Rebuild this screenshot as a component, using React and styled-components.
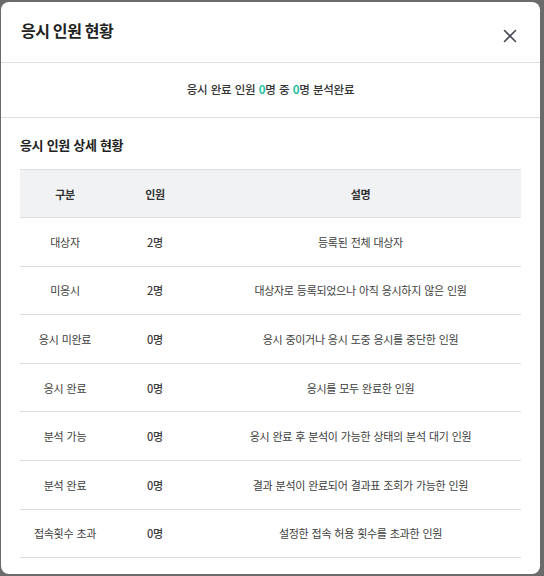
import styled, { createGlobalStyle } from "styled-components";

const GlobalStyle = createGlobalStyle`
  html, body {
    margin: 0;
    padding: 0;
    background: #6b6b6b;
  }
  body {
    font-family: "Noto Sans CJK KR", "Noto Sans", sans-serif;
    color: #333;
  }
`;

const rows = [
  { type: "대상자", count: 2, desc: "등록된 전체 대상자" },
  { type: "미응시", count: 2, desc: "대상자로 등록되었으나 아직 응시하지 않은 인원" },
  { type: "응시 미완료", count: 0, desc: "응시 중이거나 응시 도중 응시를 중단한 인원" },
  { type: "응시 완료", count: 0, desc: "응시를 모두 완료한 인원" },
  { type: "분석 가능", count: 0, desc: "응시 완료 후 분석이 가능한 상태의 분석 대기 인원" },
  { type: "분석 완료", count: 0, desc: "결과 분석이 완료되어 결과표 조회가 가능한 인원" },
  { type: "접속횟수 초과", count: 0, desc: "설정한 접속 허용 횟수를 초과한 인원" },
];

const Page = styled.div`
  padding: 2px 4px 2px 1px;
`;

const Modal = styled.div`
  background: #fff;
  border-radius: 8px;
  height: 572px;
  overflow: hidden;
`;

const Header = styled.div`
  box-sizing: border-box;
  display: flex;
  justify-content: space-between;
  align-items: flex-start;
  padding: 18px 20px 0 20px;
  border-bottom: 1px solid #dedfe3;
  height: 61px;
`;

const Title = styled.h2`
  margin: 0;
  font-size: 16px;
  line-height: 20px;
  font-weight: 700;
  letter-spacing: -0.4px;
  color: #222;
`;

const CloseButton = styled.button`
  border: 0;
  background: none;
  padding: 0;
  margin: 7px 1px 0 0;
  width: 18px;
  height: 18px;
  display: flex;
  align-items: center;
  justify-content: center;
  cursor: pointer;
`;

const Summary = styled.div`
  height: 55px;
  box-sizing: border-box;
  border-bottom: 1px solid #dedfe3;
  display: flex;
  align-items: center;
  justify-content: center;
  font-size: 11.5px;
  font-weight: 500;
  letter-spacing: -0.25px;
  word-spacing: 1px;
  color: #333;
  padding-bottom: 2px;
`;

const Num = styled.span`
  color: #1cc09f;
  font-weight: 700;
`;

const Body = styled.div`
  padding: 0 19px 0 19px;
`;

const SectionTitle = styled.h3`
  margin: 17px 0 14px;
  font-size: 13px;
  line-height: 20px;
  font-weight: 700;
  letter-spacing: -0.4px;
  word-spacing: 1px;
  color: #222;
`;

const Table = styled.table`
  width: 100%;
  border-collapse: collapse;
  table-layout: fixed;
  font-size: 11px;
  letter-spacing: -0.3px;
  word-spacing: 1px;
`;

const HeadCell = styled.th`
  background: #f1f2f4;
  height: 47px;
  padding: 0;
  font-weight: 700;
  color: #333;
  border-top: 1px solid #dcdde1;
  border-bottom: 1px solid #dcdde1;
  width: ${(p) => p.$w || "auto"};
`;

const Cell = styled.td`
  height: 47.6px;
  padding: 0;
  text-align: center;
  color: #3d3d3d;
  font-weight: ${(p) => (p.$strong ? 500 : 400)};
  border-bottom: 1px solid #dcdde1;
`;

const CloseIcon = () => (
  <svg width="14" height="14" viewBox="0 0 14 14" fill="none">
    <path d="M1.5 1.5L12.5 12.5M12.5 1.5L1.5 12.5" stroke="#454a52" strokeWidth="1.6" strokeLinecap="round" />
  </svg>
);

export default function App() {
  return (
    <Page>
      <GlobalStyle />
      <Modal>
        <Header>
          <Title>응시 인원 현황</Title>
          <CloseButton aria-label="닫기">
            <CloseIcon />
          </CloseButton>
        </Header>
        <Summary>
          응시 완료 인원&nbsp;<Num>0</Num>명 중&nbsp;<Num>0</Num>명 분석완료
        </Summary>
        <Body>
          <SectionTitle>응시 인원 상세 현황</SectionTitle>
          <Table>
            <thead>
              <tr>
                <HeadCell $w="90px">구분</HeadCell>
                <HeadCell $w="90px">인원</HeadCell>
                <HeadCell>설명</HeadCell>
              </tr>
            </thead>
            <tbody>
              {rows.map((r) => (
                <tr key={r.type}>
                  <Cell>{r.type}</Cell>
                  <Cell $strong>{r.count}명</Cell>
                  <Cell>{r.desc}</Cell>
                </tr>
              ))}
            </tbody>
          </Table>
        </Body>
      </Modal>
    </Page>
  );
}
